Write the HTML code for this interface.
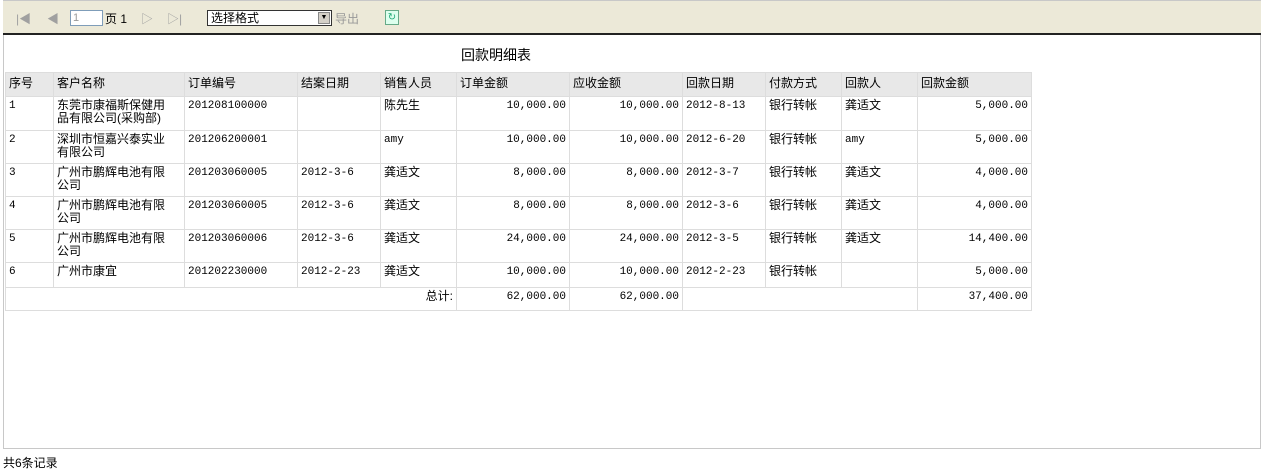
<!DOCTYPE html>
<html><head><meta charset="utf-8"><style>
*{margin:0;padding:0;box-sizing:border-box}
body{width:1263px;height:472px;background:#fff;font-family:"Liberation Sans","Noto Sans CJK SC",sans-serif;font-size:12px;color:#000;position:relative;overflow:hidden}
.frame{position:absolute;left:3px;top:0;width:1258px;height:449px;border:1px solid #c8c8c8;border-top:none}
.tb{position:absolute;left:3px;top:0;width:1258px;height:35px;background:#ece9d8;border-bottom:2px solid #222;border-top:1px solid #c8c8c8}
.ic{position:absolute;top:9px;color:#a0a0a0;font-size:12px}
.pg{position:absolute;left:67px;top:9px;width:33px;height:16px;border:1px solid #7f9db9;background:#fff;font-size:11px;color:#999;padding-left:2px;line-height:14px}
.sel{position:absolute;left:204px;top:9px;width:125px;height:16px;border:1px solid #333;background:#fff;font-size:12px;line-height:14px;padding-left:3px}
.sel b{position:absolute;right:1px;top:1px;width:12px;height:12px;background:#d4d0c8;border:1px solid #888;font-size:7px;text-align:center;line-height:10px}
.title{position:absolute;left:461px;top:45px;font-size:14px}
table{position:absolute;left:5px;top:72px;border-collapse:collapse;table-layout:fixed;border:1px solid #888}
td{border:1px solid #ddd;vertical-align:top;padding:2px 3px;line-height:13px;font-size:12px;overflow:hidden}
td.c2{padding-right:14px}
tr.h td{background:#e8e8e8;height:24px;padding-top:4px}
.n{text-align:right;font-family:"Liberation Mono",monospace;font-size:11px;padding-top:3px}
.m{font-family:"Liberation Mono",monospace;font-size:11px;padding-top:3px}
.st{position:absolute;left:3px;top:454px;font-size:12px}
</style></head><body>
<div class="frame"></div>
<div class="tb">
<span class="ic" style="left:13px">|◀</span>
<span class="ic" style="left:44px">◀</span>
<div class="pg">1</div>
<span style="position:absolute;left:102px;top:9px">页 1</span>
<span class="ic" style="left:138px">▷</span>
<span class="ic" style="left:164px">▷|</span>
<div class="sel">选择格式<b>▼</b></div>
<span style="position:absolute;left:332px;top:9px;color:#999">导出</span>
<span style="position:absolute;left:382px;top:9px;width:14px;height:15px;border:1px solid #6a8;background:#dfe;color:#2a7;font-size:10px;text-align:center;line-height:13px">↻</span>
</div>
<div class="title">回款明细表</div>
<table>
<colgroup><col style="width:48px"><col style="width:131px"><col style="width:113px"><col style="width:83px"><col style="width:76px"><col style="width:113px"><col style="width:113px"><col style="width:83px"><col style="width:76px"><col style="width:76px"><col style="width:114px"></colgroup>
<tr class="h"><td>序号</td><td>客户名称</td><td>订单编号</td><td>结案日期</td><td>销售人员</td><td>订单金额</td><td>应收金额</td><td>回款日期</td><td>付款方式</td><td>回款人</td><td>回款金额</td></tr>
<tr style="height:34px"><td class="m">1</td><td class="c2">东莞市康福斯保健用品有限公司(采购部)</td><td class="m">201208100000</td><td></td><td>陈先生</td><td class="n">10,000.00</td><td class="n">10,000.00</td><td class="m">2012-8-13</td><td>银行转帐</td><td>龚适文</td><td class="n">5,000.00</td></tr>
<tr style="height:33px"><td class="m">2</td><td class="c2">深圳市恒嘉兴泰实业有限公司</td><td class="m">201206200001</td><td></td><td class="m">amy</td><td class="n">10,000.00</td><td class="n">10,000.00</td><td class="m">2012-6-20</td><td>银行转帐</td><td class="m">amy</td><td class="n">5,000.00</td></tr>
<tr style="height:33px"><td class="m">3</td><td class="c2">广州市鹏辉电池有限公司</td><td class="m">201203060005</td><td class="m">2012-3-6</td><td>龚适文</td><td class="n">8,000.00</td><td class="n">8,000.00</td><td class="m">2012-3-7</td><td>银行转帐</td><td>龚适文</td><td class="n">4,000.00</td></tr>
<tr style="height:33px"><td class="m">4</td><td class="c2">广州市鹏辉电池有限公司</td><td class="m">201203060005</td><td class="m">2012-3-6</td><td>龚适文</td><td class="n">8,000.00</td><td class="n">8,000.00</td><td class="m">2012-3-6</td><td>银行转帐</td><td>龚适文</td><td class="n">4,000.00</td></tr>
<tr style="height:33px"><td class="m">5</td><td class="c2">广州市鹏辉电池有限公司</td><td class="m">201203060006</td><td class="m">2012-3-6</td><td>龚适文</td><td class="n">24,000.00</td><td class="n">24,000.00</td><td class="m">2012-3-5</td><td>银行转帐</td><td>龚适文</td><td class="n">14,400.00</td></tr>
<tr style="height:25px"><td class="m">6</td><td class="c2">广州市康宜</td><td class="m">201202230000</td><td class="m">2012-2-23</td><td>龚适文</td><td class="n">10,000.00</td><td class="n">10,000.00</td><td class="m">2012-2-23</td><td>银行转帐</td><td></td><td class="n">5,000.00</td></tr>
<tr style="height:23px"><td colspan="5" style="text-align:right">总计:</td><td class="n">62,000.00</td><td class="n">62,000.00</td><td colspan="3"></td><td class="n">37,400.00</td></tr>
</table>
<div class="st">共6条记录</div>
</body></html>
